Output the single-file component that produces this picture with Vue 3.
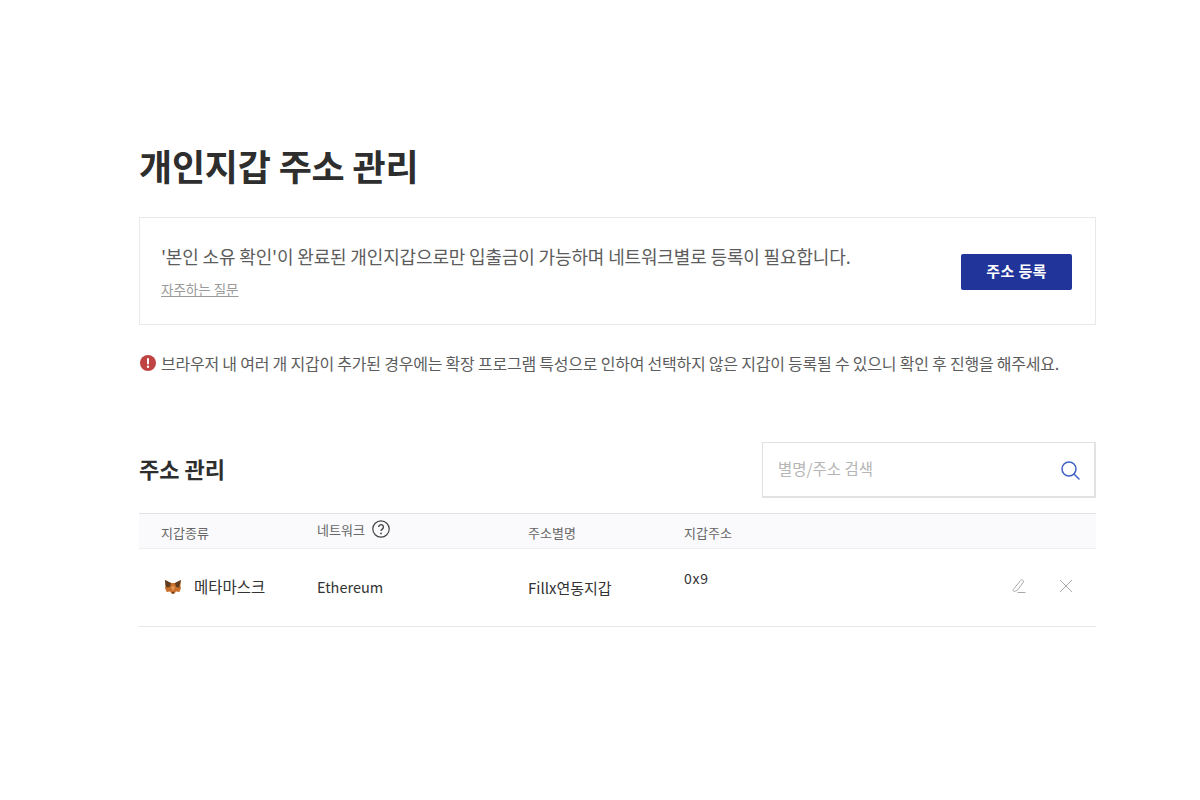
<script setup>
const columns = ['지갑종류', '네트워크', '주소별명', '지갑주소']
</script>

<template>
  <main class="page">
    <h1 class="title">개인지갑 주소 관리</h1>

    <section class="notice">
      <div class="notice-text">
        <p class="notice-main">'본인 소유 확인'이 완료된 개인지갑으로만 입출금이 가능하며 네트워크별로 등록이 필요합니다.</p>
        <a class="faq">자주하는 질문</a>
      </div>
      <button class="register">주소 등록</button>
    </section>

    <p class="warning">
      <svg class="warn-icon" viewBox="0 0 16 16" width="16" height="16">
        <circle cx="8" cy="8" r="8" fill="#c04343" />
        <rect x="7" y="3" width="2" height="6.4" rx="1" fill="#fff" />
        <circle cx="8" cy="11.8" r="1.2" fill="#fff" />
      </svg>
      <span>브라우저 내 여러 개 지갑이 추가된 경우에는 확장 프로그램 특성으로 인하여 선택하지 않은 지갑이 등록될 수 있으니 확인 후 진행을 해주세요.</span>
    </p>

    <div class="manage-head">
      <h2 class="subtitle">주소 관리</h2>
      <div class="search">
        <span class="placeholder">별명/주소 검색</span>
        <svg class="search-icon" viewBox="0 0 20 20" width="20" height="20" fill="none" stroke="#3f62c4" stroke-width="1.5">
          <circle cx="9" cy="9" r="7" />
          <path d="M14 14l5 5" stroke-linecap="round" />
        </svg>
      </div>
    </div>

    <div class="table">
      <div class="row head">
        <span class="cell">{{ columns[0] }}</span>
        <span class="cell net-head">
          {{ columns[1] }}
          <svg viewBox="0 0 18 18" width="18" height="18" fill="none" stroke="#444" stroke-width="1.2">
            <circle cx="9" cy="9" r="8.2" />
            <path d="M6.6 7.1a2.4 2.4 0 1 1 3.7 2c-.9.6-1.3 1-1.3 2" stroke-width="1.4" />
            <circle cx="9" cy="13.4" r=".9" fill="#444" stroke="none" />
          </svg>
        </span>
        <span class="cell">{{ columns[2] }}</span>
        <span class="cell">{{ columns[3] }}</span>
        <span></span>
      </div>
      <div class="row body">
        <span class="cell wallet">
          <svg viewBox="0 0 18 17" width="18" height="17">
            <path d="M1 2l6 3h4l6-3-.6 6 .6 2-1.600 4-3.400-.5-1.600 2H7.600L6 13.500l-3.400.5L1 10l.6-2z" fill="#c9702a" />
            <path d="M1 2l6 3-1 4-3.400.5L1.600 8zM17 2l-6 3 1 4 3.400.5.000-1.500z" fill="#5f3d22" />
            <path d="M7 9l2 4 2-4-2-1z" fill="#e39a5c" />
            <path d="M7.600 15.500h2.800L9 13.500z" fill="#3a2a20" />
          </svg>
          <span>메타마스크</span>
        </span>
        <span class="cell network">Ethereum</span>
        <span class="cell alias">Fillx연동지갑</span>
        <span class="cell address">0x9</span>
        <span class="actions">
          <svg viewBox="0 0 16 16" width="16" height="16" fill="none" stroke="#aaa" stroke-width="1">
            <path d="M3.500 10 9.500 2.500c1.200-1.400 3.500-.4 3 1.400L7 11.500c-1.500 1.800-5 2.600-5 1 0-.8.800-1.700 1.500-2.500z" />
            <path d="M6.500 14.500h8" />
          </svg>
          <svg viewBox="0 0 14 14" width="14" height="14" fill="none" stroke="#aaa" stroke-width="1">
            <path d="M1 1l12 12M13 1L1 13" />
          </svg>
        </span>
      </div>
    </div>
  </main>
</template>

<style>
html, body { background: #fff; }
</style>

<style scoped>
.page {
  width: 957px;
  margin-left: 139px;
  padding-top: 140px;
  font-family: "Noto Sans CJK KR", "Noto Sans", sans-serif;
  color: #333;
}
.title {
  margin: 0;
  font-size: 36px;
  line-height: 50px;
  font-weight: 700;
  color: #2e2e2e;
  letter-spacing: -0.2px;
}
.notice {
  margin-top: 27px;
  height: 108px;
  box-sizing: border-box;
  border: 1px solid #e9e9e9;
  padding: 0 23px 0 21px;
  display: flex;
  align-items: center;
  justify-content: space-between;
}
.notice-main {
  margin: 0;
  font-size: 18px;
  line-height: 26px;
  letter-spacing: -0.15px;
  color: #5c5c5c;
}
.faq {
  display: inline-block;
  margin-top: 11px;
  font-size: 13.5px;
  line-height: 18px;
  color: #9a9a9a;
  text-decoration: underline;
}
.register {
  width: 111px;
  height: 36px;
  margin-top: 1px;
  padding: 0 0 3px;
  border: 0;
  border-radius: 2px;
  background: #20349a;
  color: #fff;
  font: 700 15px "Noto Sans CJK KR", sans-serif;
  letter-spacing: 0.4px;
}
.warning {
  margin: 26px 0 0;
  display: flex;
  align-items: center;
  gap: 5px;
  font-size: 16px;
  line-height: 24px;
  letter-spacing: -0.22px;
  color: #5c5c5c;
  white-space: nowrap;
}
.warn-icon { flex: none; margin-left: 1px; }
.manage-head {
  margin-top: 67px;
  display: flex;
  align-items: center;
  justify-content: space-between;
}
.subtitle {
  margin: -5px 0 0;
  font-size: 22px;
  font-weight: 700;
  color: #2e2e2e;
}
.search {
  width: 334px;
  height: 56px;
  box-sizing: border-box;
  border: 1px solid #e2e2e2;
  border-right-width: 2px;
  border-bottom-width: 2px;
  padding: 0 14px 0 15px;
  display: flex;
  align-items: center;
  justify-content: space-between;
}
.placeholder { font-size: 15.5px; color: #b5b5b5; margin-top: -3px; }
.table { margin-top: 15px; }
.row {
  display: grid;
  grid-template-columns: 178px 211px 156px 1fr auto;
}
.cell { padding-left: 22px; }
.row .cell:nth-child(n+2) { padding-left: 0; }
.head {
  height: 36px;
  box-sizing: border-box;
  background: #fafafc;
  border-top: 1px solid #e2e2e2;
  border-bottom: 1px solid #eee;
  align-items: center;
  font-size: 13px;
  color: #666;
}
.head .cell { margin-top: 2px; }
.head .net-head { display: flex; align-items: center; gap: 7px; margin-top: -4px; }
.body {
  height: 78px;
  box-sizing: border-box;
  border-bottom: 1px solid #e6e6e6;
  align-items: center;
  font-size: 14.5px;
  color: #333;
}
.wallet { display: flex; align-items: center; gap: 12px; padding-left: 25px !important; font-size: 15.5px; margin-top: -3px; }
.network { margin-top: -3px; }
.alias { margin-top: 0; font-size: 15px; }
.address { margin-top: -19px; font-size: 14px; letter-spacing: 0.8px; }
.actions { display: flex; align-items: center; gap: 32px; padding-right: 23px; margin-top: -4px; }
</style>
